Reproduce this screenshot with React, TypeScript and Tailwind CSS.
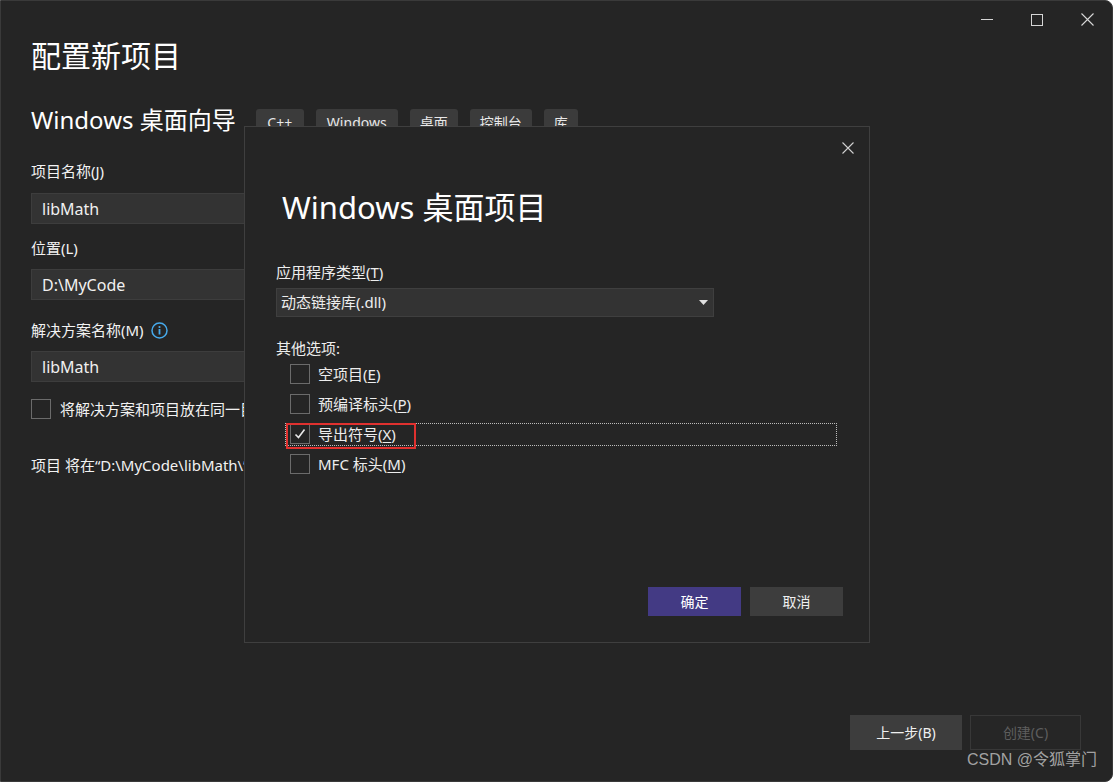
import React from 'react'

const FONT = '"Noto Sans", "Noto Sans CJK SC", sans-serif'

const TAGS: [string, number][] = [
  ['C++', 48],
  ['Windows', 82],
  ['桌面', 48],
  ['控制台', 62],
  ['库', 34],
]

function Box({ checked }: { checked?: boolean }) {
  return (
    <div className="w-[20px] h-[20px] border border-[#6b6b6b] flex items-center justify-center shrink-0">
      {checked && (
        <svg width="14" height="14" viewBox="0 0 14 14">
          <path d="M2.5 7.5 L5.5 10.5 L11.5 2.5" fill="none" stroke="#e8e8e8" strokeWidth="1.6" />
        </svg>
      )}
    </div>
  )
}

function Option({ label, hot, checked, focus }: { label: string; hot: string; checked?: boolean; focus?: boolean }) {
  return (
    <div className="h-[30px] flex items-center">
      <div
        className={`flex items-center h-[23px] ml-[-5px] pl-[4px] border ${
          focus ? 'border-dotted border-[#bdbdbd] w-[552px]' : 'border-transparent'
        }`}
      >
        <Box checked={checked} />
        <span className="ml-[8px] text-[15px] text-[#ededed] leading-none">
          {label}(<span className="underline underline-offset-2">{hot}</span>)
        </span>
      </div>
    </div>
  )
}

function Input({ value }: { value: string }) {
  return (
    <div className="h-[31px] w-[240px] bg-[#333333] border border-[#3d3d3d] flex items-center pl-[10px] text-[16px] text-[#f0f0f0]">
      {value}
    </div>
  )
}

export default function App() {
  return (
    <div
      className="relative w-[1113px] h-[782px] bg-[#252525] border border-[#3a3a3a] rounded-tr-[8px] rounded-br-[8px] overflow-hidden flex flex-col text-[#f2f2f2]"
      style={{ fontFamily: FONT }}
    >
      {/* window chrome */}
      <div className="absolute top-0 right-0 flex items-center h-[37px]">
        <div className="w-[50px] flex justify-center">
          <div className="w-[12px] h-px bg-[#d6d6d6]" />
        </div>
        <div className="w-[50px] flex justify-center">
          <div className="w-[12px] h-[12px] border border-[#d6d6d6]" />
        </div>
        <div className="w-[50px] flex justify-center">
          <svg width="13" height="13" viewBox="0 0 13 13">
            <path d="M0.5 0.5 L12.5 12.5 M12.5 0.5 L0.5 12.5" stroke="#d6d6d6" strokeWidth="1.1" />
          </svg>
        </div>
      </div>

      <div className="pl-[30px] pt-[35px]">
        <h1 className="text-[30px] leading-[40px] text-white">配置新项目</h1>
        <div className="mt-[29px] flex items-center h-[30px]">
          <span className="text-[24px] text-white whitespace-nowrap">Windows 桌面向导</span>
          <div className="flex gap-[12px] ml-[20px] self-start mt-[4px]">
            {TAGS.map(([t, w]) => (
              <div
                key={t}
                className="h-[27px] rounded-[3px] bg-[#3b3b3b] text-[14px] flex items-center justify-center text-[#e8e8e8]"
                style={{ width: w }}
              >
                {t}
              </div>
            ))}
          </div>
        </div>

        <div className="mt-[26px] text-[15px] leading-[20px]">项目名称(J)</div>
        <div className="mt-[12px]"><Input value="libMath" /></div>
        <div className="mt-[14px] text-[15px] leading-[20px]">位置(L)</div>
        <div className="mt-[11px]"><Input value="D:\MyCode" /></div>
        <div className="mt-[20px] text-[15px] leading-[20px] flex items-center">
          解决方案名称(M)
          <svg className="ml-[7px]" width="17" height="17" viewBox="0 0 17 17">
            <circle cx="8.5" cy="8.5" r="7.5" fill="none" stroke="#46a9ea" strokeWidth="1.5" />
            <circle cx="8.5" cy="5" r="1.1" fill="#46a9ea" />
            <rect x="7.6" y="7" width="1.8" height="5.5" fill="#46a9ea" />
          </svg>
        </div>
        <div className="mt-[11px]"><Input value="libMath" /></div>
        <div className="mt-[16px] flex items-center">
          <Box />
          <span className="ml-[9px] text-[15px] whitespace-nowrap">将解决方案和项目放在同一目录中</span>
        </div>
        <div className="mt-[34px] text-[15px] leading-[20px] whitespace-nowrap">项目 将在“D:\MyCode\libMath\”中创建</div>
      </div>

      <div className="mt-auto flex justify-end gap-[8px] pr-[31px] pb-[31px]">
        <div className="w-[112px] h-[35px] bg-[#3d3d3d] flex items-center justify-center text-[14px] text-[#f0f0f0]">上一步(B)</div>
        <div className="w-[111px] h-[35px] bg-[#262626] border border-[#383838] flex items-center justify-center text-[14px] text-[#5e5e5e]">创建(C)</div>
      </div>

      {/* modal dialog */}
      <div className="absolute left-[243px] top-[125px] w-[626px] h-[517px] bg-[#252525] border border-[#3f3f3f] flex flex-col">
        <div className="absolute right-[15px] top-[15px]">
          <svg width="12" height="12" viewBox="0 0 12 12">
            <path d="M0.5 0.5 L11.5 11.5 M11.5 0.5 L0.5 11.5" stroke="#cfcfcf" strokeWidth="1.1" />
          </svg>
        </div>
        <div className="pl-[37px] pt-[60px] text-[31px] leading-[40px] text-white">Windows 桌面项目</div>
        <div className="pl-[31px]">
          <div className="mt-[35px] text-[15px] leading-[20px] text-[#ededed]">
            应用程序类型(<span className="underline underline-offset-2">T</span>)
          </div>
          <div className="mt-[6px] w-[438px] h-[29px] bg-[#333333] border border-[#3f3f3f] flex items-center justify-between pl-[4px] pr-[5px]">
            <span className="text-[15px] text-[#ededed]">动态链接库(.dll)</span>
            <svg width="9" height="5" viewBox="0 0 9 5">
              <path d="M0 0 L9 0 L4.5 5 Z" fill="#e0e0e0" />
            </svg>
          </div>
          <div className="mt-[21px] text-[15px] leading-[20px] text-[#ededed]">其他选项:</div>
          <div className="mt-[1px] pl-[14px]">
            <Option label="空项目" hot="E" />
            <Option label="预编译标头" hot="P" />
            <Option label="导出符号" hot="X" checked focus />
            <Option label="MFC 标头" hot="M" />
          </div>
        </div>
        <div className="mt-auto mb-[26px] flex justify-end gap-[9px] pr-[26px]">
          <div className="w-[93px] h-[29px] bg-[#433a84] flex items-center justify-center text-[14px] text-white">确定</div>
          <div className="w-[93px] h-[29px] bg-[#3d3d3d] flex items-center justify-center text-[14px] text-[#f0f0f0]">取消</div>
        </div>
      </div>

      {/* annotation */}
      <div className="absolute left-[285px] top-[422px] w-[130px] h-[26px] border-2 border-[#e0312f]" />

      {/* watermark */}
      <div
        className="absolute right-[15px] bottom-[9px] text-[16px] text-[#c4c4c4]/80 whitespace-nowrap"
        style={{ fontFamily: '"Liberation Sans", "Noto Sans CJK SC", sans-serif' }}
      >
        CSDN @令狐掌门
      </div>
    </div>
  )
}
